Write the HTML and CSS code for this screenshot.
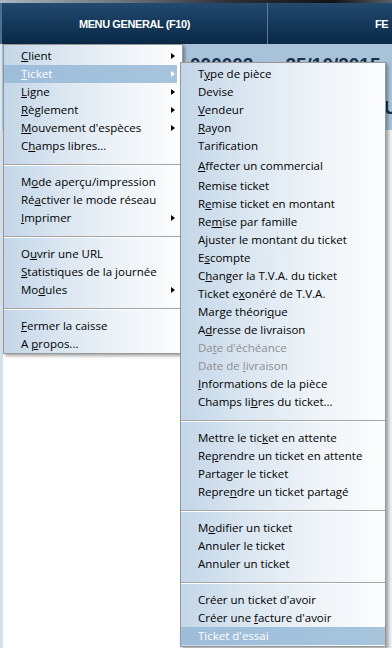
FILE: index.html
```html
<!DOCTYPE html>
<html lang="fr">
<head>
<meta charset="utf-8">
<title>Menu général</title>
<link rel="stylesheet" href="styles.css">
</head>
<body>
<div class="screen">
  <div class="topstrip"></div>
  <div class="bar">
    <div class="tab tab-main">MENU GENERAL (F10)</div>
    <div class="tab tab-next">FE</div>
  </div>
  <div class="info">
    <div class="info-line1"><span class="num">000002</span><span class="date">25/10/2015</span></div>
    <div class="info-line2">U</div>
  </div>
  <div class="rest"></div>
</div>

<div class="menu menu-main">
  <div class="item"><span><u>C</u>lient</span><i class="arrow"></i></div>
  <div class="item hl"><span><u>T</u>icket</span><i class="arrow"></i></div>
  <div class="item"><span><u>L</u>igne</span><i class="arrow"></i></div>
  <div class="item"><span><u>R</u>èglement</span><i class="arrow"></i></div>
  <div class="item"><span><u>M</u>ouvement d'espèces</span><i class="arrow"></i></div>
  <div class="item"><span>C<u>h</u>amps libres...</span></div>
  <div class="sep"></div>
  <div class="item"><span>M<u>o</u>de aperçu/impression</span></div>
  <div class="item"><span>Ré<u>a</u>ctiver le mode réseau</span></div>
  <div class="item"><span><u>I</u>mprimer</span><i class="arrow"></i></div>
  <div class="sep"></div>
  <div class="item"><span>O<u>u</u>vrir une URL</span></div>
  <div class="item"><span><u>S</u>tatistiques de la journée</span></div>
  <div class="item"><span>Mo<u>d</u>ules</span><i class="arrow"></i></div>
  <div class="sep"></div>
  <div class="item"><span><u>F</u>ermer la caisse</span></div>
  <div class="item"><span>A <u>p</u>ropos...</span></div>
</div>

<div class="menu menu-sub">
  <div class="item"><span>T<u>y</u>pe de pièce</span></div>
  <div class="item"><span>Devise</span></div>
  <div class="item"><span><u>V</u>endeur</span></div>
  <div class="item"><span><u>R</u>ayon</span></div>
  <div class="item"><span>Tarification</span></div>
  <div class="item tall"><span><u>A</u>ffecter un commercial</span></div>
  <div class="item"><span>Remise ticket</span></div>
  <div class="item"><span>R<u>e</u>mise ticket en montant</span></div>
  <div class="item"><span>Re<u>m</u>ise par famille</span></div>
  <div class="item"><span>Ajuster le montant du ticket</span></div>
  <div class="item"><span>E<u>s</u>compte</span></div>
  <div class="item"><span>C<u>h</u>anger la T.V.A. du ticket</span></div>
  <div class="item"><span>Ticket e<u>x</u>onéré de T.V.A.</span></div>
  <div class="item"><span>Marge théori<u>q</u>ue</span></div>
  <div class="item"><span>A<u>d</u>resse de livraison</span></div>
  <div class="item dis"><span>Da<u>t</u>e d'échéance</span></div>
  <div class="item dis"><span>Date de <u>l</u>ivraison</span></div>
  <div class="item"><span><u>I</u>nformations de la pièce</span></div>
  <div class="item"><span>Champs li<u>b</u>res du ticket...</span></div>
  <div class="sep"></div>
  <div class="item"><span>Mettre le tic<u>k</u>et en attente</span></div>
  <div class="item"><span>Re<u>p</u>rendre un ticket en attente</span></div>
  <div class="item"><span>Parta<u>g</u>er le ticket</span></div>
  <div class="item"><span>Repre<u>n</u>dre un ticket partagé</span></div>
  <div class="sep"></div>
  <div class="item"><span>M<u>o</u>difier un ticket</span></div>
  <div class="item"><span>Annuler le ticket</span></div>
  <div class="item"><span>Annuler un ticket</span></div>
  <div class="sep"></div>
  <div class="item"><span>Créer un ticket d'avoir</span></div>
  <div class="item"><span>Créer une <u>f</u>acture d'avoir</span></div>
  <div class="item hl"><span>Ticket d'essai</span></div>
</div>
</body>
</html>
```

FILE: styles.css
```css
html, body {
  margin: 0;
  padding: 0;
}

body {
  width: 392px;
  height: 648px;
  overflow: hidden;
  position: relative;
  background: #ffffff;
  font-family: "Open Sans", "Liberation Sans", sans-serif;
}

.screen {
  width: 392px;
  height: 648px;
  display: flex;
  flex-direction: column;
  overflow: hidden;
}

.topstrip {
  height: 3px;
  flex: none;
  background: linear-gradient(to right, #aab6c2 0%, #6f777f 30%, #2b2e33 60%, #111315 85%, #5a6068 100%);
}

.bar {
  height: 41px;
  flex: none;
  display: flex;
  background: linear-gradient(to bottom, #234a6f 0%, #163a5c 45%, #0a2846 100%);
  box-shadow: inset 2px 0 0 #4d6f90;
}

.tab {
  display: flex;
  align-items: center;
  color: #ffffff;
  font-family: "Liberation Sans", Arial, sans-serif;
  font-weight: bold;
  font-size: 11px;
  letter-spacing: -0.4px;
  white-space: nowrap;
  overflow: hidden;
}

.tab-main {
  width: 268px;
  flex: none;
  justify-content: center;
  border-right: 1px solid #5c7b99;
  box-sizing: border-box;
  padding-left: 2px;
}

.tab-next {
  flex: 1;
  padding-left: 107px;
}

.info {
  height: 86px;
  flex: none;
  box-sizing: border-box;
  padding-top: 9px;
  background: linear-gradient(to right, #dbe6f0 0 2px, #a8c2d9 2px);
  color: #1a3049;
  font-family: "Liberation Sans", Arial, sans-serif;
  font-weight: bold;
  font-size: 19px;
  white-space: nowrap;
  overflow: hidden;
}

.info-line1 {
  line-height: 24px;
  padding-left: 190px;
}

.date {
  margin-left: 32px;
}

.info-line2 {
  line-height: 24px;
  margin-top: 19px;
  padding-left: 384px;
}

.rest {
  flex: 1;
  background: linear-gradient(to right, #d3dfeb 0 3px, #ffffff 3px, #ffffff 385px, #e4e8ec 388px, #eef1f4 392px);
}

/* Menus (overlays) */
.menu {
  position: absolute;
  box-sizing: content-box;
  border: 1px solid #979797;
  background: linear-gradient(to right, #c3d6e8 0%, #d9e5f0 30%, #eef3f8 65%, #fcfdfe 100%);
  color: #000000;
  font-family: "Open Sans", "Liberation Sans", sans-serif;
  font-size: 11.5px;
  box-shadow: 2px 2px 3px rgba(0, 0, 0, 0.35);
}

.menu-main {
  left: 3px;
  top: 44px;
  width: 178px;
  padding: 2px 0 0;
}

.menu-sub {
  left: 180px;
  top: 62px;
  width: 204px;
  padding: 2px 0 1px;
}

.item {
  height: 18px;
  line-height: 18px;
  padding-left: 17px;
  display: flex;
  align-items: center;
  justify-content: space-between;
  white-space: nowrap;
}

.item.tall {
  height: 22px;
  line-height: 22px;
}

.item u {
  text-decoration: underline;
  text-underline-offset: 1px;
}

.item.hl {
  background: linear-gradient(to right, #9dbdd9, #a7c4dd);
  color: #ffffff;
}

.menu-main .item.hl {
  margin-right: 5px;
}

.item.dis {
  color: #8e8e8e;
}

.arrow {
  width: 0;
  height: 0;
  border-left: 4px solid #000000;
  border-top: 3.5px solid transparent;
  border-bottom: 3.5px solid transparent;
  margin-right: 7px;
}

.item.hl .arrow {
  border-left-color: #ffffff;
  margin-right: 2px;
}

.sep {
  height: 18px;
  display: flex;
  align-items: center;
}

.sep::before {
  content: "";
  flex: 1;
  height: 1px;
  background: #a3a3a3;
  box-shadow: 0 1px 0 #ffffff;
}
```
